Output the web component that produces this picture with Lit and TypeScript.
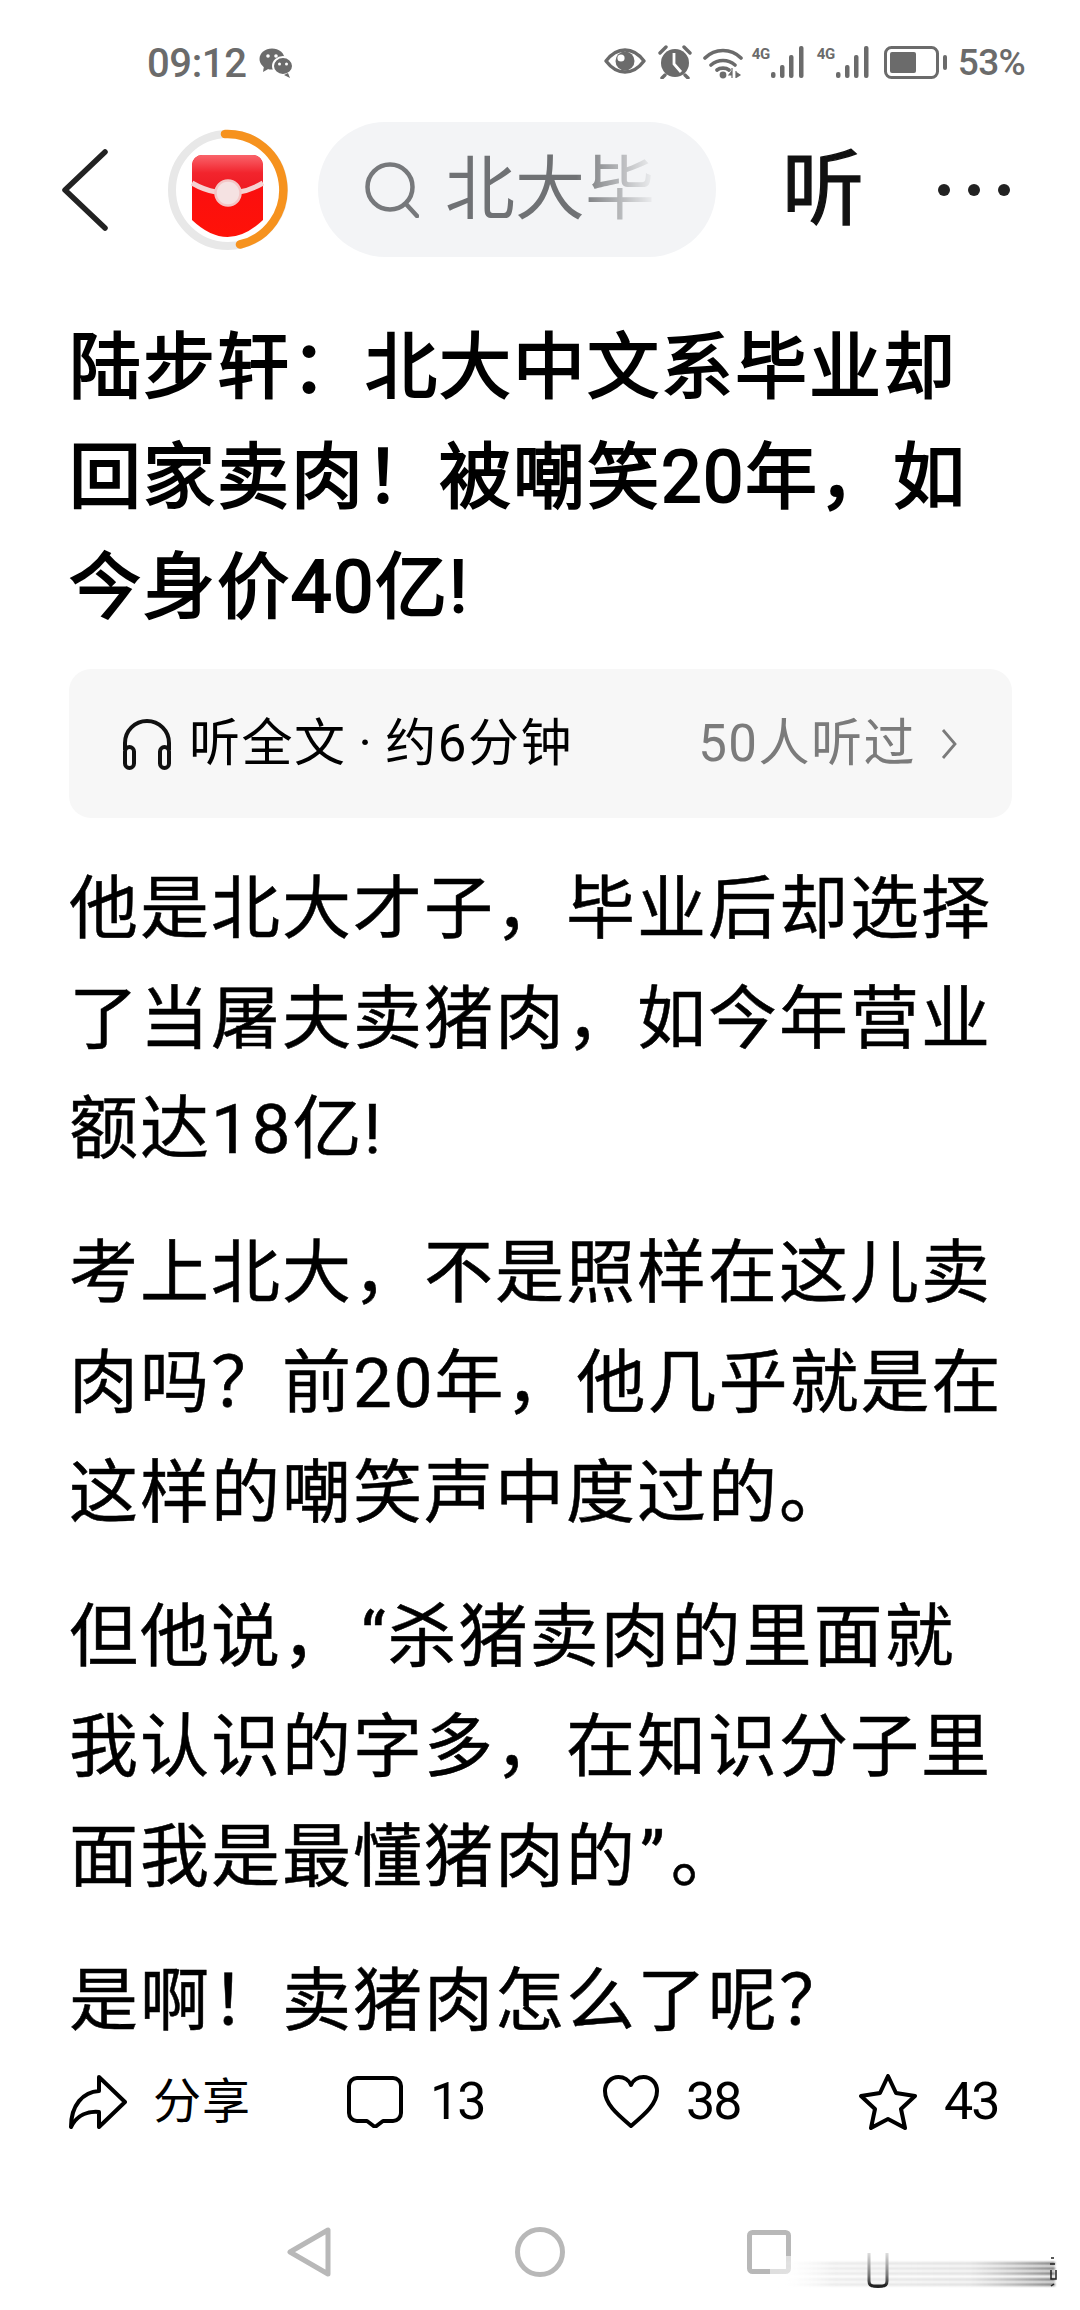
import { LitElement, html, css, svg, unsafeCSS } from "lit";
import { customElement } from "lit/decorators.js";

const FONT = unsafeCSS(`Roboto, "Noto Sans CJK SC", sans-serif`);

const C = "\uFF0C"; // fullwidth comma
const X = "\uFF01"; // fullwidth exclamation
const Q = "\uFF1F"; // fullwidth question
const K = "\uFF1A"; // fullwidth colon

const TITLE = [`陆步轩${K}北大中文系毕业却`, `回家卖肉${X}被嘲笑20年${C}如`, `今身价40亿!`];
const PARAS = [
  [`他是北大才子${C}毕业后却选择`, `了当屠夫卖猪肉${C}如今年营业`, `额达18亿!`],
  [`考上北大${C}不是照样在这儿卖`, `肉吗${Q}前20年${C}他几乎就是在`, `这样的嘲笑声中度过的。`],
  [`但他说${C}“杀猪卖肉的里面就`, `我认识的字多${C}在知识分子里`, `面我是最懂猪肉的”。`],
  [`是啊${X}卖猪肉怎么了呢${Q}`],
];

/** Wraps runs of Latin digits and curly quotes so they can get their own spacing. */
function rich(line: string) {
  return line.split(/(\d+|[“”])/).map((part) => {
    if (/^\d+$/.test(part)) return html`<span class="d">${part}</span>`;
    if (part === "“") return html`<span class="qo">${part}</span>`;
    if (part === "”") return html`<span class="qc">${part}</span>`;
    return part;
  });
}

const wechat = svg`<svg width="34" height="30" viewBox="0 0 34 30"><ellipse cx="13" cy="11" rx="12.5" ry="10.5" fill="#6b6b6b"/><path d="M5 18l-1 6 7-4z" fill="#6b6b6b"/><ellipse cx="24" cy="18" rx="10" ry="9" fill="#6b6b6b" stroke="#fff" stroke-width="2"/><path d="M29 25l2 5-6-3z" fill="#6b6b6b"/><circle cx="9" cy="8" r="1.8" fill="#fff"/><circle cx="17" cy="8" r="1.8" fill="#fff"/><circle cx="20.5" cy="16" r="1.5" fill="#fff"/><circle cx="27.5" cy="16" r="1.5" fill="#fff"/></svg>`;
const eye = svg`<svg width="42" height="26" viewBox="0 0 42 26"><path d="M2 13C8 5 14 2 21 2s13 3 19 11c-6 8-12 11-19 11S8 21 2 13z" fill="none" stroke="#6b6b6b" stroke-width="3.4" stroke-linejoin="round"/><circle cx="21" cy="13" r="9.5" fill="#6b6b6b"/><circle cx="17" cy="10" r="3.6" fill="#fff"/></svg>`;
const alarm = svg`<svg width="36" height="34" viewBox="0 0 36 34"><circle cx="18" cy="18" r="14" fill="#6b6b6b"/><path d="M3 8l6-6M33 8l-6-6M8 30l-3 3M28 30l3 3" stroke="#6b6b6b" stroke-width="3.4" stroke-linecap="round"/><path d="M17 8v11l7 8" fill="none" stroke="#fff" stroke-width="2.8"/></svg>`;
const wifi = svg`<svg width="40" height="32" viewBox="0 0 40 32"><path d="M2 11C12 1 28 1 38 11M8 18c7-6 17-6 24 0M14 23c3-2.500 9-2.500 12 0" fill="none" stroke="#6b6b6b" stroke-width="3.600" stroke-linecap="round"/><circle cx="20" cy="28" r="3.400" fill="#6b6b6b"/><path d="M29 24l-3 4h3zM29 21v10M33 24v7M34 26l3 2-3 2z" fill="#6b6b6b" stroke="#6b6b6b" stroke-width="1.200"/></svg>`;
const signal = svg`<svg width="36" height="34" viewBox="0 0 36 34"><g fill="#6b6b6b"><rect x="1" y="27" width="4.500" height="6" rx="2"/><rect x="10" y="20" width="4.500" height="13" rx="2"/><rect x="19" y="10" width="4.500" height="23" rx="2"/><rect x="29" y="1" width="4.500" height="32" rx="2"/></g></svg>`;
const battery = svg`<svg width="64" height="33" viewBox="0 0 64 33"><rect x="1.500" y="1.500" width="52" height="30" rx="6" fill="none" stroke="#6b6b6b" stroke-width="3"/><rect x="6" y="6" width="26" height="21" rx="2" fill="#6b6b6b"/><rect x="59" y="9" width="4" height="15" rx="2" fill="#6b6b6b"/></svg>`;

const backIcon = svg`<svg width="46" height="82" viewBox="0 0 46 82"><path d="M43 3L3 41l40 38" fill="none" stroke="#222" stroke-width="5.500" stroke-linecap="round" stroke-linejoin="round"/></svg>`;

const avatar = svg`<svg width="122" height="122" viewBox="0 0 122 122">
  <defs>
    <linearGradient id="flap" x1="0" y1="0" x2="0" y2="1"><stop offset="0" stop-color="#f9646b"/><stop offset=".5" stop-color="#f2242d"/><stop offset="1" stop-color="#ee1a22"/></linearGradient>
    <linearGradient id="body" x1="0" y1="0" x2="0" y2="1"><stop offset="0" stop-color="#f80d14"/><stop offset="1" stop-color="#ff1208"/></linearGradient>
  </defs>
  <circle cx="60" cy="61" r="56" fill="none" stroke="#e8e8e8" stroke-width="8"/>
  <path d="M57 5 A56 56 0 0 1 72 115.500" fill="none" stroke="#f6921e" stroke-width="8.500" stroke-linecap="round"/>
  <path d="M24 36a10 10 0 0 1 10-10h51a10 10 0 0 1 10 10v55q-18 17-35.500 17t-35.500-17z" fill="url(#body)"/>
  <path d="M24 36a10 10 0 0 1 10-10h51a10 10 0 0 1 10 10v17q-17 9-35.500 9t-35.500-9z" fill="url(#flap)"/>
  <path d="M24 54q12 7 24 9M95 54q-12 7-24 9" fill="none" stroke="#f6d2d2" stroke-width="5"/>
  <circle cx="60" cy="64" r="12.500" fill="#f5e2e2" stroke="#f3c6c6" stroke-width="2.500"/>
</svg>`;

const searchIcon = svg`<svg width="54" height="56" viewBox="0 0 54 56"><circle cx="25" cy="25" r="22.500" fill="none" stroke="#76787b" stroke-width="4.500"/><path d="M41 42l11 12" stroke="#76787b" stroke-width="4.500" stroke-linecap="round"/></svg>`;

const headphones = svg`<svg width="50" height="52" viewBox="0 0 50 52"><path d="M3 32V25a22 22 0 0 1 44 0v7" fill="none" stroke="#111" stroke-width="4"/><rect x="3" y="29" width="9" height="21" rx="4.500" fill="none" stroke="#111" stroke-width="4"/><rect x="38" y="29" width="9" height="21" rx="4.500" fill="none" stroke="#111" stroke-width="4"/></svg>`;
const cardChevron = svg`<svg width="18" height="32" viewBox="0 0 18 32"><path d="M3 2l12 14L3 30" fill="none" stroke="#7b7b7b" stroke-width="2.800"/></svg>`;

const shareIcon = svg`<svg width="58" height="54" viewBox="0 0 58 54"><path d="M30 2l26 25-26 25V37C19 36 8 40 2 52 2 30 14 17 30 16z" fill="none" stroke="#000" stroke-width="4" stroke-linejoin="round"/></svg>`;
const commentIcon = svg`<svg width="56" height="52" viewBox="0 0 56 52"><path d="M10 2h36a8 8 0 0 1 8 8v27a8 8 0 0 1-8 8H36l-8 6-8-6H10a8 8 0 0 1-8-8V10a8 8 0 0 1 8-8z" fill="none" stroke="#000" stroke-width="4" stroke-linejoin="round"/></svg>`;
const heartIcon = svg`<svg width="56" height="54" viewBox="0 0 56 54"><path d="M28 51C14 39 2 29 2 16 2 8 8 2 15.500 2 21 2 26 5 28 10c2-5 7-8 12.500-8C48 2 54 8 54 16c0 13-12 23-26 35z" fill="none" stroke="#000" stroke-width="4" stroke-linejoin="round"/></svg>`;
const starIcon = svg`<svg width="58" height="56" viewBox="0 0 58 56"><path d="M29 2l8 17 19 3-14 13 4 19-17-9-17 9 4-19L2 22l19-3z" fill="none" stroke="#000" stroke-width="4" stroke-linejoin="round"/></svg>`;

const navBack = svg`<svg width="44" height="50" viewBox="0 0 44 50"><path d="M41 3v44L3 25z" fill="none" stroke="#b8b8b8" stroke-width="5" stroke-linejoin="round"/></svg>`;
const navHome = svg`<svg width="50" height="50" viewBox="0 0 50 50"><circle cx="25" cy="25" r="22.500" fill="none" stroke="#b8b8b8" stroke-width="5"/></svg>`;
const navRecent = svg`<svg width="44" height="44" viewBox="0 0 44 44"><rect x="2.500" y="2.500" width="39" height="39" rx="3" fill="none" stroke="#b8b8b8" stroke-width="5"/></svg>`;

/* Smeared residue over the lower right of the navigation bar: fading strips, a U mark, a dark fragment. */
const smear = svg`<svg width="310" height="44" viewBox="0 0 310 44">
  <defs>
    <linearGradient id="stripe" x1="0" y1="0" x2="1" y2="0">
      <stop offset="0" stop-color="#fff" stop-opacity="0"/>
      <stop offset=".2" stop-color="#ddd" stop-opacity=".6"/>
      <stop offset=".7" stop-color="#d0d0d0" stop-opacity=".7"/>
      <stop offset="1" stop-color="#777"/>
    </linearGradient>
    <linearGradient id="uside" x1="0" y1="0" x2="0" y2="1">
      <stop offset="0" stop-color="#ddd"/>
      <stop offset=".7" stop-color="#777"/>
      <stop offset="1" stop-color="#222"/>
    </linearGradient>
    <filter id="soft"><feGaussianBlur stdDeviation="1.200"/></filter>
  </defs>
  <rect x="0" y="4" width="40" height="36" fill="#fff" opacity=".55"/>
  <g fill="url(#stripe)" filter="url(#soft)">
    <rect x="6" y="10" width="279" height="3"/>
    <rect x="6" y="15" width="279" height="3"/>
    <rect x="6" y="20" width="279" height="3"/>
    <rect x="6" y="26" width="279" height="3"/>
    <rect x="6" y="31" width="279" height="3"/>
  </g>
  <path d="M99 1v28q0 5 5 5h8q5 0 5-5V1" fill="none" stroke="url(#uside)" stroke-width="3"/>
  <path d="M100 33q4 2 8 2t8-2" fill="none" stroke="#222" stroke-width="2"/>
  <path d="M281 6h3M280 12h5M281 18v9h5v-9M281 34l3-2" fill="none" stroke="#222" stroke-width="1.500"/>
</svg>`;

@customElement("app-root")
export class AppRoot extends LitElement {
  static styles = css`
    :host {
      display: block;
      position: relative;
      width: 1080px;
      height: 2310px;
      overflow: hidden;
      background: #fff;
      color: #000;
      font-family: ${FONT};
    }
    .status {
      height: 122px;
      box-sizing: border-box;
      padding: 44px 0 0 147px;
      display: flex;
      align-items: flex-start;
      color: #6b6b6b;
    }
    .time { font-size: 40px; line-height: 40px; width: 112px; letter-spacing: -0.4px; font-weight: 500; }
    .status-right { margin-left: auto; display: flex; align-items: flex-start; height: 36px; padding-right: 55px; }
    .status-right svg { display: block; }
    .eye { margin: 4px 11px 0 0; }
    .alarm { margin: 1px 10px 0 0; }
    .wifi { margin: 3px 9px 0 0; }
    .g { font-size: 15px; line-height: 16px; font-weight: 700; width: 18px; margin-top: 2px; letter-spacing: -0.5px; }
    .sig { margin: 1px 11px 0 0; }
    .bat { margin: 2px 10px 0 2px; }
    .pct { font-size: 37px; line-height: 38px; letter-spacing: -0.7px; font-weight: 500; }
    .wechat { margin-top: 4px; }

    .nav { height: 135px; display: flex; align-items: center; padding-left: 62px; }
    .back { display: block; width: 46px; height: 82px; }
    .avatar { display: block; margin-left: 60px; width: 122px; height: 122px; }
    .search {
      margin-left: 28px;
      width: 398px;
      height: 135px;
      border-radius: 68px;
      background: #f3f4f6;
      display: flex;
      align-items: center;
      box-sizing: border-box;
      padding-left: 47px;
    }
    .search svg { display: block; }
    .q {
      margin-left: 26px;
      width: 212px;
      white-space: nowrap;
      font-size: 70px;
      line-height: 80px;
      color: #6f7174;
      -webkit-mask-image: linear-gradient(90deg, #000 62%, transparent 100%);
      mask-image: linear-gradient(90deg, #000 62%, transparent 100%);
    }
    .listen { margin-left: 66px; font-size: 82px; line-height: 90px; width: 86px; color: #111; -webkit-text-stroke: 1.2px #111; }
    .dots { display: flex; gap: 18px; margin-left: 70px; }
    .dots i { display: block; width: 12px; height: 12px; border-radius: 50%; background: #222; }

    article { padding: 56px 0 0 69px; }
    h1 { margin: 0; font-size: 72px; line-height: 110px; font-weight: 400; letter-spacing: 2px; white-space: nowrap; -webkit-text-stroke: 2px #000; }
    h1 .d { letter-spacing: 1.5px; }
    .line { display: block; white-space: nowrap; }
    .card {
      margin: 26px 0 37px 0;
      width: 943px;
      height: 149px;
      box-sizing: border-box;
      border-radius: 22px;
      background: #f7f7f7;
      display: flex;
      align-items: center;
      padding: 0 54px 0 53px;
    }
    .card svg { display: block; }
    .card .l { margin-left: 17px; font-size: 51px; line-height: 60px; letter-spacing: 1.5px; color: #000; white-space: nowrap; }
    .card .dot { margin: 0 12px; }
    .card .r { margin-left: auto; font-size: 51px; line-height: 60px; color: #7b7b7b; letter-spacing: 1.5px; white-space: nowrap; }
    .card .chev { margin-left: 24px; }
    p { margin: 0 0 34px; font-size: 69px; line-height: 110px; letter-spacing: 2px; -webkit-text-stroke: 0.5px #000; }
    p .qo { margin-left: 8px; }
    p .qc { letter-spacing: 6px; margin-left: 3px; }

    .actions {
      position: absolute;
      left: 69px;
      top: 2074px;
      height: 56px;
      display: flex;
      align-items: center;
    }
    .act { display: flex; align-items: center; width: 256px; font-size: 52px; line-height: 56px; letter-spacing: -2px; }
    .act.first { width: 278px; }
    .act svg { display: block; }
    .act .t { margin-left: 27px; }
    .act .share { margin-left: 26px; font-size: 48px; letter-spacing: 1px; }

    .sysnav {
      position: absolute;
      left: 287px;
      top: 2227px;
      display: flex;
      align-items: center;
    }
    .sysnav svg { display: block; }
    .sysnav .home { margin-left: 184px; }
    .sysnav .rec { margin-left: 182px; }
    .smear { position: absolute; left: 770px; top: 2252px; }
    .smear svg { display: block; }
  `;

  render() {
    return html`
      <div class="status">
        <span class="time">09:12</span>
        <span class="wechat">${wechat}</span>
        <div class="status-right">
          <span class="eye">${eye}</span>
          <span class="alarm">${alarm}</span>
          <span class="wifi">${wifi}</span>
          <span class="g">4G</span><span class="sig">${signal}</span>
          <span class="g">4G</span><span class="sig">${signal}</span>
          <span class="bat">${battery}</span>
          <span class="pct">53%</span>
        </div>
      </div>
      <div class="nav">
        <span class="back">${backIcon}</span>
        <span class="avatar">${avatar}</span>
        <div class="search">${searchIcon}<div class="q">北大毕</div></div>
        <div class="listen">听</div>
        <div class="dots"><i></i><i></i><i></i></div>
      </div>
      <article>
        <h1>${TITLE.map((l) => html`<span class="line">${rich(l)}</span>`)}</h1>
        <div class="card">
          ${headphones}
          <span class="l">听全文<span class="dot">·</span>约6分钟</span>
          <span class="r">50人听过</span>
          <span class="chev">${cardChevron}</span>
        </div>
        ${PARAS.map((p) => html`<p>${p.map((l) => html`<span class="line">${rich(l)}</span>`)}</p>`)}
      </article>
      <div class="actions">
        <div class="act first">${shareIcon}<span class="share">分享</span></div>
        <div class="act">${commentIcon}<span class="t">13</span></div>
        <div class="act">${heartIcon}<span class="t">38</span></div>
        <div class="act">${starIcon}<span class="t">43</span></div>
      </div>
      <div class="sysnav">
        ${navBack}<span class="home">${navHome}</span><span class="rec">${navRecent}</span>
      </div>
      <div class="smear">${smear}</div>
    `;
  }
}
